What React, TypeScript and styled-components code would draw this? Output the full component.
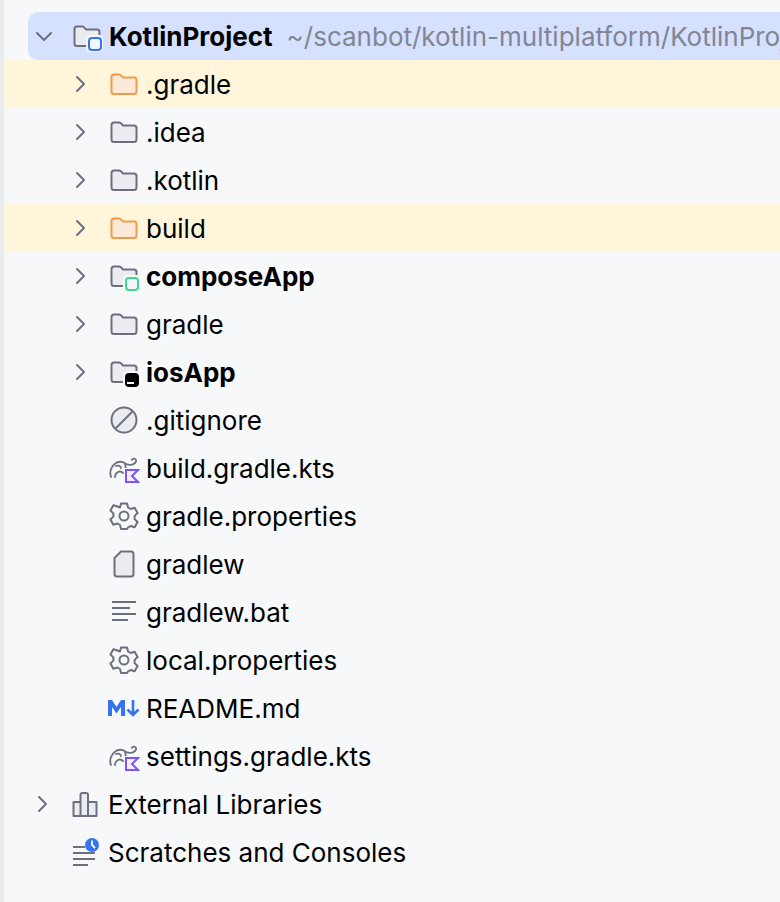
import { ReactNode } from 'react';
import styled, { createGlobalStyle } from 'styled-components';

const GlobalStyle = createGlobalStyle`
  html, body {
    margin: 0;
    padding: 0;
    background: #f7f8fa;
  }
`;

const GREY = '#6c707e';
const GREY_FILL = '#ebecf0';

function FolderShape({ stroke = GREY, fill = GREY_FILL }: { stroke?: string; fill?: string }) {
  return (
    <path
      d="M6 3.5h5.2c.6 0 1.1.2 1.5.6l2.4 2.4h10.9c1.4 0 2.5 1.1 2.5 2.5v11.5c0 1.4-1.1 2.5-2.5 2.5H6c-1.4 0-2.5-1.1-2.5-2.5V6c0-1.4 1.1-2.5 2.5-2.5z"
      transform="translate(0 3)"
      fill={fill}
      stroke={stroke}
      strokeWidth="2"
      strokeLinejoin="round"
    />
  );
}

function Folder() {
  return (
    <Icon viewBox="0 0 32 32">
      <FolderShape />
    </Icon>
  );
}

function OrangeFolder() {
  return (
    <Icon viewBox="0 0 32 32">
      <FolderShape stroke="#f2994a" fill="#fde9d9" />
    </Icon>
  );
}

function ModuleFolder({ badge, solid }: { badge: string; solid?: boolean }) {
  return (
    <Icon viewBox="0 0 32 32">
      <FolderShape />
      <rect x="15" y="15" width="17" height="17" rx="4" fill="#f7f8fa" />
      <rect
        x="18"
        y="18"
        width="12"
        height="12"
        rx="3"
        fill={solid ? badge : '#f2f5ff'}
        stroke={badge}
        strokeWidth="2"
      />
      {solid && <rect x="19" y="26" width="7" height="2" fill="#fff" />}
    </Icon>
  );
}

function GitIgnore() {
  return (
    <Icon viewBox="0 0 32 32">
      <circle cx="16" cy="16" r="12.5" fill={GREY_FILL} stroke={GREY} strokeWidth="2" />
      <path d="M7.5 24.5L24.5 7.5" stroke={GREY} strokeWidth="2" />
    </Icon>
  );
}

function KotlinGradle() {
  return (
    <Icon viewBox="0 0 32 32">
      <path
        d="M3 25c-2-5 0-11 5-14 4-2 8-1 10 1 3 1 7 1 9-1 1-1 2-3 0-4-1-1-3 0-3 1M7 25c0-2 1-4 3-5 2-1 4 0 5 1M8 14c2-1 5 0 5 2M17 12c1 2 1 4 0 6"
        fill="none"
        stroke={GREY}
        strokeWidth="1.8"
        strokeLinecap="round"
        strokeLinejoin="round"
      />
      <rect x="16" y="16" width="16" height="16" fill="#f7f8fa" />
      <path d="M18 18h12l-6 6 6 6H18z" fill="#f3effd" stroke="#7f52ff" strokeWidth="2" strokeLinejoin="miter" />
    </Icon>
  );
}

function Gear() {
  return (
    <Icon viewBox="0 0 32 32">
      <path
        d="M13 3.5h6l1 4 2.6 1.5 4-1.2 3 5.2-3 2.9v3.2l3 2.9-3 5.2-4-1.2L20 27.5l-1 1.5h-6l-1-4-2.6-1.5-4 1.2-3-5.2 3-2.9v-3.2l-3-2.9 3-5.2 4 1.2L12 7.500z"
        fill="none"
        stroke={GREY}
        strokeWidth="2"
        strokeLinejoin="round"
      />
      <circle cx="16" cy="16" r="4.500" fill="none" stroke={GREY} strokeWidth="2" />
    </Icon>
  );
}

function FileIcon() {
  return (
    <Icon viewBox="0 0 32 32">
      <path
        d="M13 3.500h10c1.400 0 2.500 1.100 2.500 2.500v20c0 1.400-1.100 2.500-2.500 2.500H9c-1.400 0-2.500-1.100-2.500-2.500V10z"
        fill={GREY_FILL}
        stroke={GREY}
        strokeWidth="2"
        strokeLinejoin="round"
      />
    </Icon>
  );
}

function TextFile() {
  return (
    <Icon viewBox="0 0 32 32">
      <path d="M4 6h24M4 12h18M4 18h24M4 24h16" stroke={GREY} strokeWidth="2" fill="none" />
    </Icon>
  );
}

function Markdown() {
  return (
    <Icon viewBox="0 0 32 32">
      <path d="M0 24V8h4l4.500 7L13 8h4v16h-4v-9l-4.500 6.500L4 15v9z" fill="#3574f0" />
      <path d="M25 8v14M19.500 17.500L25 23l5.500-5.500" fill="none" stroke="#3574f0" strokeWidth="2.600" />
    </Icon>
  );
}

function Libraries() {
  return (
    <Icon viewBox="0 0 32 32">
      <path
        d="M3.500 14h7v14h-7zM10.500 7c0-1 1-2 2-2h3.500c1 0 2 1 2 2v21h-7.500zM18 14h8.500v14H18z"
        fill={GREY_FILL}
        stroke={GREY}
        strokeWidth="2"
        strokeLinejoin="round"
      />
    </Icon>
  );
}

function Scratches() {
  return (
    <Icon viewBox="0 0 32 32">
      <path d="M3 11h12M3 17h22M3 23h22M3 29h15" stroke={GREY} strokeWidth="2" fill="none" />
      <circle cx="22" cy="9" r="7" fill="#3574f0" />
      <path d="M22 4.500V9l3 3" fill="none" stroke="#fff" strokeWidth="1.800" />
    </Icon>
  );
}

function Chevron({ open }: { open?: boolean }) {
  return (
    <ChevronIcon viewBox="0 0 32 32">
      <path
        d={open ? 'M9 13l7 7 7-7' : 'M12 9l7 7-7 7'}
        fill="none"
        stroke={GREY}
        strokeWidth="2"
        strokeLinecap="round"
        strokeLinejoin="round"
      />
    </ChevronIcon>
  );
}

type TreeRowProps = {
  icon: ReactNode;
  name: string;
  depth?: number;
  expandable?: boolean;
  open?: boolean;
  bold?: boolean;
  excluded?: boolean;
  selected?: boolean;
  hint?: string;
};

function TreeRow({ icon, name, depth = 0, expandable, open, bold, excluded, selected, hint }: TreeRowProps) {
  return (
    <Row $depth={depth} $excluded={excluded} $selected={selected}>
      <ChevronSlot>{expandable && <Chevron open={open} />}</ChevronSlot>
      {icon}
      <Name $bold={bold}>{name}</Name>
      {hint && <Hint>{hint}</Hint>}
    </Row>
  );
}

export default function App() {
  return (
    <>
      <GlobalStyle />
      <Panel>
        <TreeRow
          selected
          expandable
          open
          bold
          icon={<ModuleFolder badge="#3574f0" />}
          name="KotlinProject"
          hint="~/scanbot/kotlin-multiplatform/KotlinProject"
        />
        <TreeRow depth={1} expandable excluded icon={<OrangeFolder />} name=".gradle" />
        <TreeRow depth={1} expandable icon={<Folder />} name=".idea" />
        <TreeRow depth={1} expandable icon={<Folder />} name=".kotlin" />
        <TreeRow depth={1} expandable excluded icon={<OrangeFolder />} name="build" />
        <TreeRow depth={1} expandable bold icon={<ModuleFolder badge="#3bd98c" />} name="composeApp" />
        <TreeRow depth={1} expandable icon={<Folder />} name="gradle" />
        <TreeRow depth={1} expandable bold icon={<ModuleFolder badge="#000" solid />} name="iosApp" />
        <TreeRow depth={1} icon={<GitIgnore />} name=".gitignore" />
        <TreeRow depth={1} icon={<KotlinGradle />} name="build.gradle.kts" />
        <TreeRow depth={1} icon={<Gear />} name="gradle.properties" />
        <TreeRow depth={1} icon={<FileIcon />} name="gradlew" />
        <TreeRow depth={1} icon={<TextFile />} name="gradlew.bat" />
        <TreeRow depth={1} icon={<Gear />} name="local.properties" />
        <TreeRow depth={1} icon={<Markdown />} name="README.md" />
        <TreeRow depth={1} icon={<KotlinGradle />} name="settings.gradle.kts" />
        <TreeRow expandable icon={<Libraries />} name="External Libraries" />
        <TreeRow icon={<Scratches />} name="Scratches and Consoles" />
      </Panel>
    </>
  );
}

const Panel = styled.div`
  box-sizing: border-box;
  width: 780px;
  height: 902px;
  padding-top: 12px;
  overflow: hidden;
  background: #f7f8fa;
  border-left: 4px solid #ebecf0;
  font-family: Inter, 'Liberation Sans', sans-serif;
  font-size: 26px;
  color: #000;
`;

const Row = styled.div<{ $depth: number; $excluded?: boolean; $selected?: boolean }>`
  display: flex;
  align-items: center;
  height: 48px;
  padding-left: ${({ $depth, $selected }) => ($selected ? -1 : 23) + 38 * $depth}px;
  margin-left: ${({ $selected }) => ($selected ? '24px' : '0')};
  white-space: nowrap;
  overflow: hidden;
  background: ${({ $excluded, $selected }) =>
    $selected ? '#d5e1ff' : $excluded ? '#fff5db' : 'transparent'};
  border-radius: ${({ $selected }) => ($selected ? '10px 0 0 10px' : '0')};
`;

const ChevronSlot = styled.span`
  flex: none;
  width: 32px;
  height: 32px;
  margin-right: 11px;
`;

const ChevronIcon = styled.svg`
  display: block;
  width: 32px;
  height: 32px;
`;

const Icon = styled.svg`
  flex: none;
  display: block;
  width: 32px;
  height: 32px;
  margin-right: 6px;
`;

const Name = styled.span<{ $bold?: boolean }>`
  font-weight: ${({ $bold }) => ($bold ? 700 : 400)};
`;

const Hint = styled.span`
  margin-left: 14px;
  color: #818594;
`;
